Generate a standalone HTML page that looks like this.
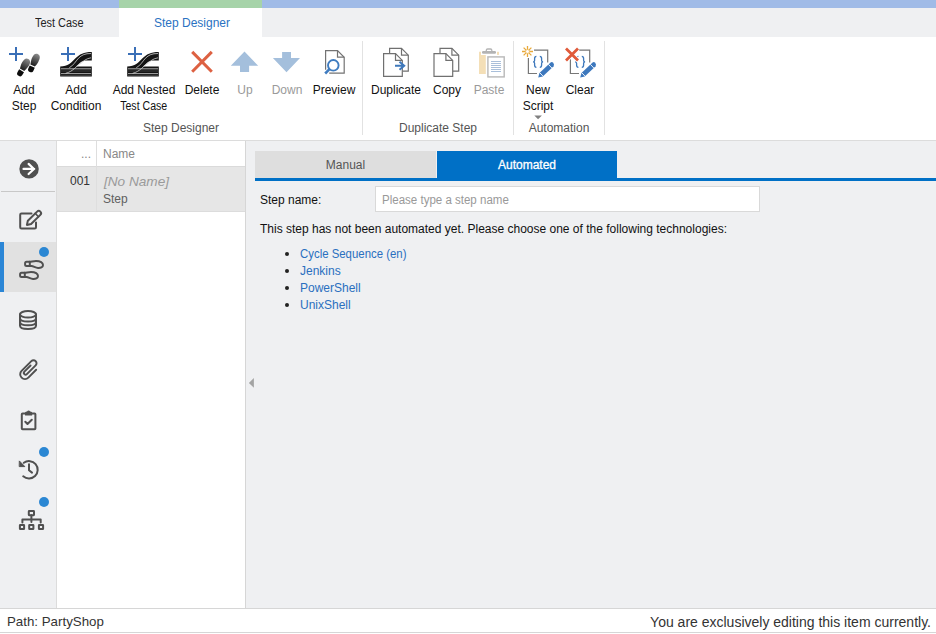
<!DOCTYPE html>
<html><head><meta charset="utf-8">
<style>
*{margin:0;padding:0;box-sizing:border-box}
html,body{width:936px;height:634px;overflow:hidden;background:#fff;font-family:"Liberation Sans",sans-serif;font-size:12px;color:#111}
.a{position:absolute}
.t{position:absolute;white-space:nowrap;line-height:16px}
.c{text-align:center}
svg{position:absolute;left:0;top:0;overflow:visible}
</style></head><body>
<!-- top color bar -->
<div class="a" style="left:0;top:0;width:936px;height:8px;background:#a0bbe7"></div>
<div class="a" style="left:119px;top:0;width:143px;height:8px;background:#a6d3a9"></div>
<!-- tab row -->
<div class="a" style="left:0;top:8px;width:936px;height:29px;background:#eff0f2"></div>
<div class="a" style="left:119px;top:8px;width:143px;height:29px;background:#fff"></div>
<div class="t" style="left:35px;top:15px;color:#222;transform:scaleX(0.91);transform-origin:0 0">Test Case</div>
<div class="t" style="left:154px;top:15px;color:#2a72c2">Step Designer</div>
<!-- ribbon -->
<div class="a" style="left:0;top:37px;width:936px;height:103px;background:#fff"></div>
<div class="a" style="left:0;top:140px;width:936px;height:1px;background:#dcdcdc"></div>
<div class="a" style="left:362px;top:41px;width:1px;height:94px;background:#e2e2e2"></div>
<div class="a" style="left:513px;top:41px;width:1px;height:94px;background:#e2e2e2"></div>
<div class="a" style="left:604px;top:41px;width:1px;height:94px;background:#e2e2e2"></div>

<!-- ribbon labels -->
<div class="t c" style="left:4px;width:40px;top:82px">Add<br>Step</div>
<div class="t c" style="left:46px;width:60px;top:82px">Add<br>Condition</div>
<div class="t c" style="left:108px;width:72px;top:82px">Add Nested<br><span style="display:inline-block;transform:scaleX(0.88)">Test Case</span></div>
<div class="t c" style="left:182px;width:40px;top:82px">Delete</div>
<div class="t c" style="left:225px;width:40px;top:82px;color:#9a9a9a">Up</div>
<div class="t c" style="left:267px;width:40px;top:82px;color:#9a9a9a">Down</div>
<div class="t c" style="left:309px;width:50px;top:82px">Preview</div>
<div class="t c" style="left:366px;width:60px;top:82px">Duplicate</div>
<div class="t c" style="left:427px;width:40px;top:82px">Copy</div>
<div class="t c" style="left:469px;width:40px;top:82px;color:#9a9a9a">Paste</div>
<div class="t c" style="left:518px;width:40px;top:82px">New<br>Script</div>
<div class="t c" style="left:560px;width:40px;top:82px">Clear</div>
<div class="t c" style="left:131px;width:100px;top:120px;color:#555">Step Designer</div>
<div class="t c" style="left:383px;width:110px;top:120px;color:#555">Duplicate Step</div>
<div class="t c" style="left:519px;width:80px;top:120px;color:#555">Automation</div>

<!-- ribbon icons -->
<svg width="936" height="140" viewBox="0 0 936 140">
  <defs>
    <linearGradient id="gf" x1="0" y1="0" x2="0" y2="1"><stop offset="0" stop-color="#8a8a8a"/><stop offset="1" stop-color="#111"/></linearGradient>
    <linearGradient id="gr" x1="0" y1="0" x2="0" y2="1"><stop offset="0" stop-color="#333"/><stop offset=".5" stop-color="#111"/><stop offset="1" stop-color="#444"/></linearGradient>
  </defs>
  <!-- plus signs -->
  <g stroke="#3a6fb7" stroke-width="2" fill="none">
    <path d="M9 54H23M16 47V61"/>
    <path d="M61 54H75M68 47V61"/>
    <path d="M128 54H142M135 47V61"/>
  </g>
  <!-- footprints -->
  <defs>
    <linearGradient id="gs" gradientUnits="userSpaceOnUse" x1="0" y1="-9.75" x2="0" y2="3"><stop offset="0" stop-color="#8c8c8c"/><stop offset="1" stop-color="#1a1a1a"/></linearGradient>
    <g id="foot">
      <path d="M0,-9.75C3.6,-9.75 4,-5.75 3.7,-2.75C3.4,0.25 2.7,1.75 2.5,2.75L-2.5,2.75C-2.7,1.25 -3.7,-0.75 -3.7,-3.75C-3.7,-7.75 -2.6,-9.75 0,-9.75Z" fill="url(#gs)"/>
      <path d="M-2.8,3.85L2.8,3.85L2.8,7.25C2.8,9.25 1.5,9.75 0,9.75C-1.5,9.75 -2.8,9.25 -2.8,7.25Z" fill="#0d0d0d"/>
    </g>
  </defs>
  <use href="#foot" transform="translate(23.5 67.4) rotate(30)"/>
  <use href="#foot" transform="translate(33.8 63) rotate(24)"/>
  <!-- rail icons -->
  <g id="rail">
    <path d="M60.2 66.4C68 66.4 71.5 62.5 75.5 58.3C79.5 54.2 83.5 51.9 91.8 51.9V60.5H88C85 60.5 83 60.8 81 62C79 63.5 77.5 65.5 76 66.4H91.8V76.4H60.2Z" fill="#141414"/>
    <path d="M61 75.5H91M61 71H91" stroke="#3a3a3a" stroke-width="1" fill="none"/>
    <path d="M61 68.8H91M61 73.6H91" stroke="#cfcfcf" stroke-width="0.8" fill="none"/>
    <path d="M69.3 67.6C73 66 75.5 61.5 78.4 58.3C82 54.8 85 53.5 91 53.5" stroke="#cfcfcf" stroke-width="0.8" fill="none"/>
    <path d="M65.6 73.3C69.5 72.5 72 70.5 74.2 68.8C77 66.2 78.5 64.8 81 63.3C83.5 61 86 58.6 91 57.8" stroke="#cfcfcf" stroke-width="0.8" fill="none"/>
  </g>
  <use href="#rail" x="67" y="0"/>
  <!-- delete -->
  <path d="M192.2 51.9L211.8 71.8M211.8 51.9L192.2 71.8" stroke="#dd6142" stroke-width="3" fill="none"/>
  <!-- up/down -->
  <path d="M244.5 51.4L258.2 65.8H249.1V71.9H240V65.8H230.8Z" fill="#a4bfdc"/>
  <path d="M282.1 52.1H291V58.1H300L286.5 72.3L272.9 58.1H282.1Z" fill="#a4bfdc"/>
  <!-- preview -->
  <g fill="none" stroke="#737373" stroke-width="1.2">
    <path d="M325.6 69.8V50.6H337.5L344.2 57.2V73.2H329.2"/>
    <path d="M337.5 50.6V57.2H344.2"/>
  </g>
  <g fill="none" stroke="#3f7cc0">
    <circle cx="333.3" cy="65.3" r="5.3" stroke-width="1.9"/>
    <path d="M329.5 69.2L325.2 73.5" stroke-width="2.6"/>
  </g>
  <!-- duplicate -->
  <g fill="#fff" stroke="#707070" stroke-width="1.2">
    <path d="M389.6 53.5V48.4H401.5L408.3 55.2V71.2H402.4"/>
    <path d="M401.5 48.4V55.2H408.3" fill="none"/>
    <path d="M383.6 53.6H395.5L402.3 60.4V76.3H383.6Z"/>
    <path d="M395.5 53.6V60.4H402.3" fill="none"/>
  </g>
  <path d="M395 65.8H404M399.5 61.8L404.2 65.8L399.5 69.8" stroke="#3e78bb" stroke-width="2" fill="none"/>
  <!-- copy -->
  <g fill="#fff" stroke="#707070" stroke-width="1.2">
    <path d="M440 53.5V48.4H451.9L458.7 55.2V71.2H452.8"/>
    <path d="M451.9 48.4V55.2H458.7" fill="none"/>
    <path d="M434 53.6H445.9L452.7 60.4V76.3H434Z"/>
    <path d="M445.9 53.6V60.4H452.7" fill="none"/>
  </g>
  <!-- paste (disabled) -->
  <path d="M479 51.8H481V55H485.8V73.9H479Z" fill="#f4dfb7"/>
  <rect x="497" y="51.8" width="2" height="3.1" fill="#f4dfb7"/>
  <rect x="482" y="51" width="14" height="2.8" rx="1.2" fill="#b4b4b4"/>
  <path d="M486.3 51.5V50.3Q486.3 49 487.6 49H490.5Q491.8 49 491.8 50.3V51.5" stroke="#b4b4b4" stroke-width="1.3" fill="none"/>
  <rect x="487.9" y="56.9" width="16.3" height="20" fill="#fff" stroke="#b8b8b8" stroke-width="1.4"/>
  <path d="M491 61.5H501M491 63.5H501M491 65.5H501M491 67.5H501M491 69.5H501M491 71.5H501" stroke="#9fb8d6" stroke-width="0.9"/>
  <!-- new script -->
  <g id="scr">
    <path d="M534 50.2H547.7V62.5M528.4 58V73.5H537" fill="none" stroke="#777" stroke-width="1.2"/>
    <path d="M536.4 56.3C534.7 56.3 534.6 57 534.6 58.5V60.4C534.6 61.4 534.1 61.8 533.1 61.8C534.1 61.8 534.6 62.2 534.6 63.2V65.1C534.6 66.6 534.7 67.3 536.4 67.3" fill="none" stroke="#3e78bb" stroke-width="1.3"/>
    <path d="M539.8 56.3C541.5 56.3 541.6 57 541.6 58.5V60.4C541.6 61.4 542.1 61.8 543.1 61.8C542.1 61.8 541.6 62.2 541.6 63.2V65.1C541.6 66.6 541.5 67.3 539.8 67.3" fill="none" stroke="#3e78bb" stroke-width="1.3"/>
    <path d="M538.2 77.6L539.45 73.06L550.3 62.76Q551.9 61.4 553.2 62.8Q554.6 64.4 553.6 66.2L542.75 76.5Z" fill="#3d78bd"/>
    <path d="M543.25 76.38L539.67 72.62M551.94 68.1L548.36 64.35" stroke="#fff" stroke-width="0.9"/>
  </g>
  <g stroke="#e8a93a" stroke-width="1.3">
    <path d="M527.5 46V57M522 51.5H533M523.6 47.6L531.4 55.4M531.4 47.6L523.6 55.4"/>
  </g>
  <circle cx="527.5" cy="51.5" r="1.8" fill="#fff" stroke="#f0c070" stroke-width=".6"/>
  <!-- clear -->
  <use href="#scr" x="42" y="0"/>
  <path d="M566 48.5L578 60.5M578 48.5L566 60.5" stroke="#fff" stroke-width="4.6"/>
  <path d="M566 48.5L578 60.5M578 48.5L566 60.5" stroke="#e05a3a" stroke-width="2.8"/>
  <!-- dropdown -->
  <path d="M534.3 115.6H541.9L538.1 119.2Z" fill="#808080"/>
</svg>

<!-- sidebar -->
<div class="a" style="left:0;top:141px;width:56px;height:467px;background:#eff0f2"></div>
<div class="a" style="left:56px;top:141px;width:1px;height:467px;background:#dcdcdc"></div>
<div class="a" style="left:1px;top:191px;width:54px;height:1px;background:#c8c8c8"></div>
<div class="a" style="left:0;top:242px;width:56px;height:50px;background:#e1e1e1"></div>
<div class="a" style="left:0;top:242px;width:4px;height:50px;background:#2b86d6"></div>

<!-- grid -->
<div class="a" style="left:57px;top:141px;width:188px;height:467px;background:#fff"></div>
<div class="a" style="left:57px;top:166px;width:188px;height:45px;background:#e6e6e6"></div>
<div class="a" style="left:57px;top:166px;width:188px;height:1px;background:#dadada"></div>
<div class="a" style="left:57px;top:211px;width:188px;height:1px;background:#dcdcdc"></div>
<div class="a" style="left:96px;top:141px;width:1px;height:70px;background:#dedede"></div>
<div class="t" style="left:57px;width:34px;top:146px;text-align:right;color:#888">...</div>
<div class="t" style="left:103px;top:146px;color:#888">Name</div>
<div class="t" style="left:57px;width:33px;top:173px;text-align:right;color:#333">001</div>
<div class="t" style="left:104px;top:174px;color:#9a9a9a;font-style:italic;font-size:13.6px">[No Name]</div>
<div class="t" style="left:103px;top:191px;color:#606060">Step</div>

<!-- panel -->
<div class="a" style="left:245px;top:141px;width:1px;height:467px;background:#d6d6d6"></div>
<div class="a" style="left:246px;top:141px;width:690px;height:467px;background:#eff0f2"></div>

<svg width="936" height="634"><path d="M253.9 378V387.8L248.9 382.9Z" fill="#a3a3a3"/></svg>

<div class="a" style="left:255px;top:151px;width:181px;height:27px;background:#dedede"></div>
<div class="a" style="left:437px;top:151px;width:180px;height:27px;background:#0070c6"></div>
<div class="a" style="left:255px;top:178px;width:681px;height:3px;background:#0070c6"></div>
<div class="t c" style="left:255px;width:181px;top:157px;color:#555">Manual</div>
<div class="t c" style="left:437px;width:180px;top:157px;color:#fff;-webkit-text-stroke:0.3px #fff">Automated</div>

<div class="t" style="left:260px;top:192px">Step name:</div>
<div class="a" style="left:375px;top:186px;width:385px;height:26px;background:#fff;border:1px solid #d9d9d9"></div>
<div class="t" style="left:382px;top:192px;color:#999;transform:scaleX(0.96);transform-origin:0 0">Please type a step name</div>
<div class="t" style="left:260px;top:221px">This step has not been automated yet. Please choose one of the following technologies:</div>
<div class="a" style="left:285px;top:252px;width:4px;height:4px;border-radius:50%;background:#222"></div>
<div class="a" style="left:285px;top:269px;width:4px;height:4px;border-radius:50%;background:#222"></div>
<div class="a" style="left:285px;top:286px;width:4px;height:4px;border-radius:50%;background:#222"></div>
<div class="a" style="left:285px;top:303px;width:4px;height:4px;border-radius:50%;background:#222"></div>
<div class="t" style="left:300px;top:246px;color:#2a6fbf;transform:scaleX(0.95);transform-origin:0 0">Cycle Sequence (en)</div>
<div class="t" style="left:300px;top:263px;color:#2a6fbf">Jenkins</div>
<div class="t" style="left:300px;top:280px;color:#2a6fbf">PowerShell</div>
<div class="t" style="left:300px;top:297px;color:#2a6fbf">UnixShell</div>

<!-- status bar -->
<div class="a" style="left:0;top:608px;width:936px;height:1px;background:#d6d6d6"></div>
<div class="a" style="left:0;top:609px;width:936px;height:23px;background:#fff"></div>
<div class="a" style="left:0;top:632px;width:936px;height:1px;background:#d6d6d6"></div>
<div class="t" style="left:7px;top:613px;font-size:13.3px;line-height:18px;color:#333">Path: PartyShop</div>
<div class="t" style="right:5px;top:613px;font-size:14px;line-height:18px;color:#333">You are exclusively editing this item currently.</div>

<!-- sidebar icons -->
<svg width="60" height="634" viewBox="0 0 60 634">
  <g fill="none" stroke="#505050" stroke-width="2" stroke-linecap="round" stroke-linejoin="round">
    <circle cx="29.05" cy="168.9" r="9.7" fill="#505050" stroke="none"/>
    <path d="M23.5 168.9H34.2M28.6 163.9L34 169L28.6 174" stroke="#fff" stroke-width="2.2"/>
    <!-- edit -->
    <path d="M31.5 213.5H21.5Q20.2 213.5 20.2 214.8V227.3Q20.2 228.6 21.5 228.6H34.7Q36 228.6 36 227.3V222.5"/>
    <g transform="translate(26.9,224.9) rotate(-44.6)"><path d="M0,0L3.6,-2.3H16.6A2.3,2.3 0 0 1 16.6,2.3H3.6Z"/><path d="M14,-2.3V2.3" stroke-width="1.6"/></g>
    
    <!-- feet -->
    <g id="sfoot">
      <path d="M29.8 261.8H26.6Q25.1 261.8 25.1 263.3V264.5Q25.1 266 26.6 266H29.8Z"/>
      <path d="M29.8 261.8C32 261.5 34 260.9 36 260.9C40.5 260.9 43 263 43 265C43 267.3 40.5 268.2 38 268C35.5 267.8 33.5 266.2 31.5 266L29.8 266"/>
    </g>
    <use href="#sfoot" x="-5" y="11"/>
    <!-- db -->
    <ellipse cx="28" cy="314.3" rx="8" ry="3.3"/>
    <path d="M20 314.3V325.8Q20 329 28 329Q36 329 36 325.8V314.3"/>
    <path d="M20 318.3Q20 321.6 28 321.6Q36 321.6 36 318.3M20 322Q20 325.3 28 325.3Q36 325.3 36 322"/>
    <!-- clip -->
    <g transform="translate(29.2,370) rotate(-45) scale(0.92)" stroke-width="2.1">
      <path d="M5.5 5.2H-6.5A5.2 5.2 0 0 1 -6.5 -5.2H8.5A3.3 3.3 0 0 1 8.5 1.4H-5A1.9 1.9 0 0 1 -5 -2.4H4.5"/>
    </g>
    <!-- clipboard -->
    <path d="M25.4 413.5H22.6Q21.8 413.5 21.8 414.3V428.5Q21.8 429.3 22.6 429.3H34.6Q35.4 429.3 35.4 428.5V414.3Q35.4 413.5 34.6 413.5H31.8"/>
    <path d="M25.6 415H31.6V413Q31.6 412 30.6 412H29.8Q28.6 410.2 27.4 412H26.6Q25.6 412 25.6 413Z" fill="#505050" stroke-width="1.2"/>
    <path d="M25.3 421.8L27.5 424L31.8 419.7"/>
    <!-- history -->
    <path d="M23.2 476.3A8.7 8.7 0 1 0 23.8 462.8"/>
    <path d="M19.6 461.2L24.8 466.6H19.6Z" fill="#505050" stroke-width="1"/>
    <path d="M29 464.3V470.3L32 472.6"/>
    <!-- hierarchy -->
    <rect x="28.8" y="511" width="5.2" height="4.2" rx=".4"/>
    <path d="M31.4 515.2V519.5M22.4 522.5V519.5H40.7V522.5M31.4 519.5V522"/>
    <rect x="19.9" y="524.9" width="4.2" height="4.2" rx=".4"/>
    <rect x="29.2" y="524.9" width="4.2" height="4.2" rx=".4"/>
    <rect x="38.9" y="524.9" width="4.2" height="4.2" rx=".4"/>
  </g>
  <circle cx="44" cy="252" r="5" fill="#2b87d3"/>
  <circle cx="44" cy="452" r="5" fill="#2b87d3"/>
  <circle cx="44" cy="502" r="5" fill="#2b87d3"/>
</svg>
</body></html>
